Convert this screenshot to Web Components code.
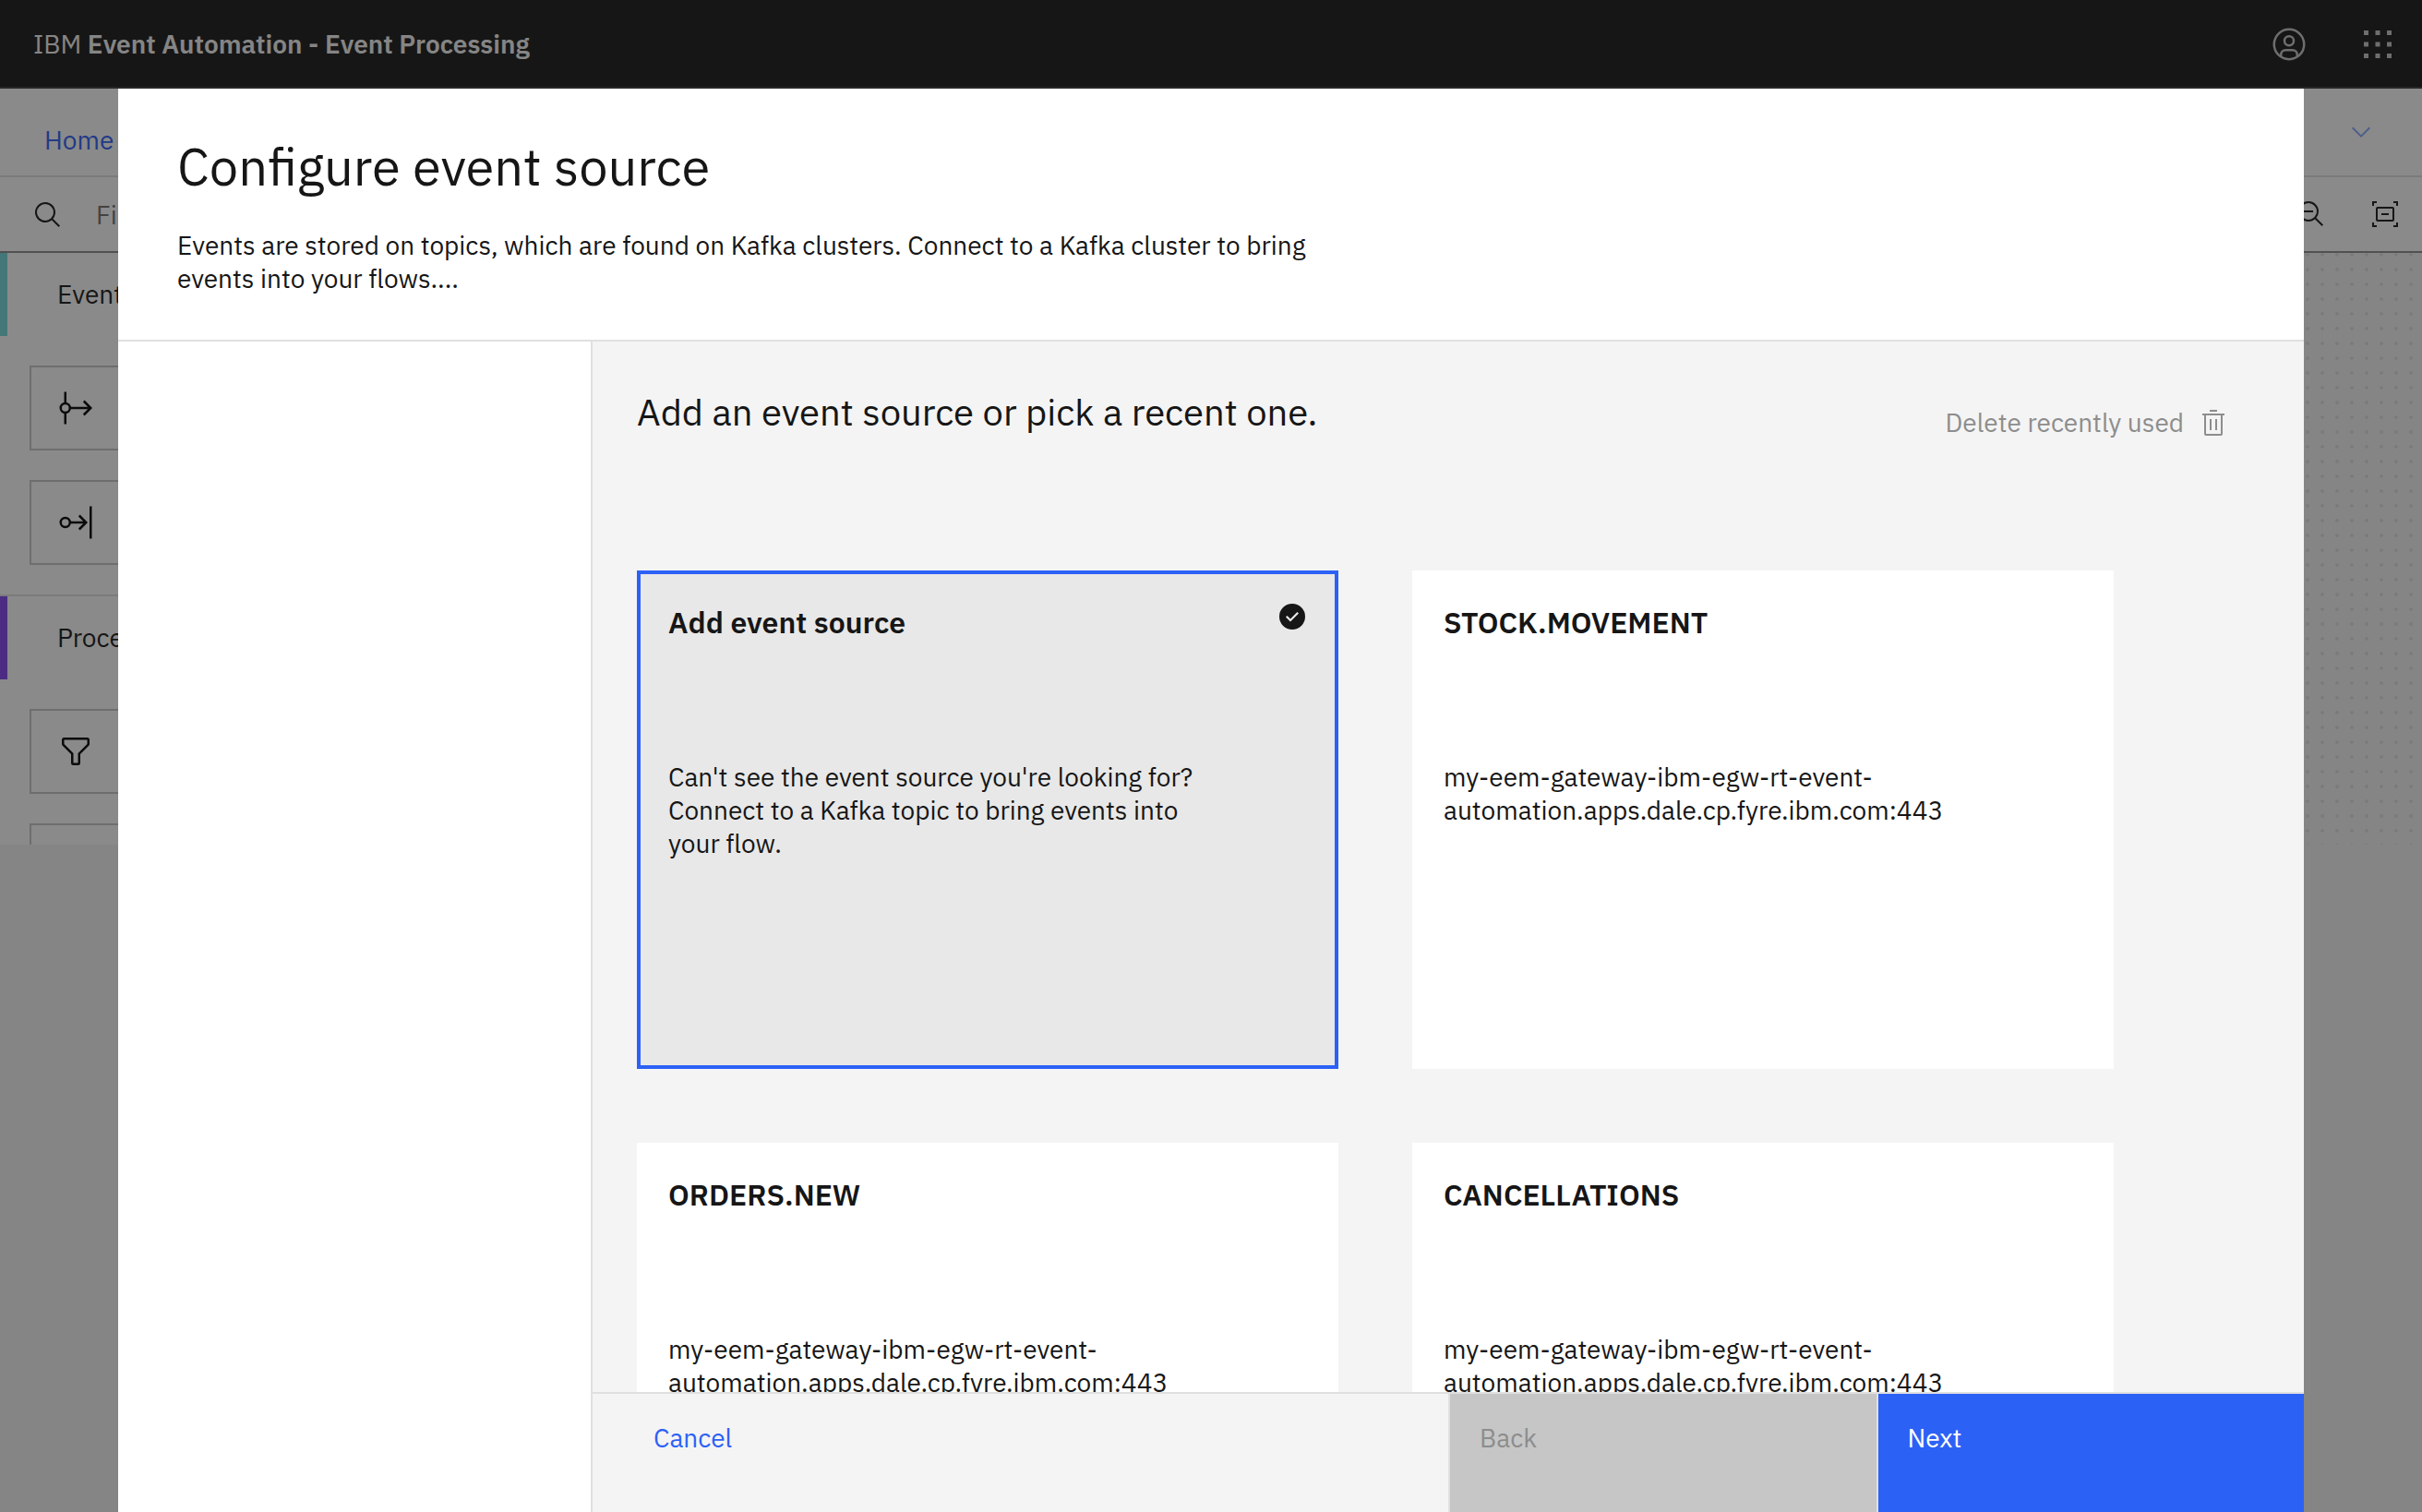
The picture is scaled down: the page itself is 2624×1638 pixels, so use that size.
<!DOCTYPE html>
<html lang="en">
<head>
<meta charset="utf-8">
<meta name="viewport" content="width=device-width, initial-scale=1">
<title>IBM Event Automation - Event Processing</title>
<style>
  :root {
    --text: #161616;
    --text-soft: #8d8d8d;
    --blue: #2c61f6;
    --layer: #f4f4f4;
    --line: #e0e0e0;
    --line-strong: #c6c6c6;
  }
  html, body { height: 100%; }
  body {
    margin: 0;
    overflow: hidden;
    background: var(--layer);
    color: var(--text);
    font-family: "IBM Plex Sans", Roboto, "Liberation Sans", sans-serif;
    font-size: 28px;
    line-height: 36px;
  }
</style>
</head>
<body>
<app-shell>
  <app-header slot="header" company="IBM" product="Event Automation - Event Processing"></app-header>
  <flow-nav slot="nav"></flow-nav>
  <flow-toolbar slot="toolbar"></flow-toolbar>
  <palette-group slot="palette" color="#72d8d8" heading="Events">
    <palette-node icon="source" label="Event source"></palette-node>
    <palette-node icon="destination" label="Event destination"></palette-node>
  </palette-group>
  <palette-group slot="palette" color="#8042ee" heading="Processors" divided>
    <palette-node icon="filter" label="Filter"></palette-node>
    <palette-node label="Transform"></palette-node>
  </palette-group>
</app-shell>

<source-dialog>
  <span slot="title">Configure event source</span>
  <span slot="description">Events are stored on topics, which are found on Kafka clusters. Connect to a Kafka cluster to bring events into your flows....</span>
  <source-picker heading="Add an event source or pick a recent one.">
    <source-card heading="Add event source" selected>Can't see the event source you're looking for? Connect to a Kafka topic to bring events into your flow.</source-card>
    <source-card heading="STOCK.MOVEMENT">my-eem-gateway-ibm-egw-rt-event-automation.apps.dale.cp.fyre.ibm.com:443</source-card>
    <source-card heading="ORDERS.NEW">my-eem-gateway-ibm-egw-rt-event-automation.apps.dale.cp.fyre.ibm.com:443</source-card>
    <source-card heading="CANCELLATIONS">my-eem-gateway-ibm-egw-rt-event-automation.apps.dale.cp.fyre.ibm.com:443</source-card>
  </source-picker>
</source-dialog>

<script>
const ICONS = {
  user: '<g fill="none" stroke="currentColor" stroke-width="2"><circle cx="16" cy="16" r="13"/><circle cx="16" cy="13" r="4"/><path d="M9 26.7V25a4 4 0 0 1 4-4h6a4 4 0 0 1 4 4v1.700"/></g>',
  switcher: '<path d="M4 4h4v4H4zM14 4h4v4h-4zM24 4h4v4h-4zM4 14h4v4H4zM14 14h4v4h-4zM24 14h4v4h-4zM4 24h4v4H4zM14 24h4v4h-4zM24 24h4v4h-4z"/>',
  chevron: '<path d="M16 22 6 12l1.400-1.400 8.600 8.600 8.600-8.600L26 12z"/>',
  search: '<path d="M29 27.586l-7.552-7.552a11.018 11.018 0 1 0-1.414 1.414L27.586 29zM4 13a9 9 0 1 1 9 9 9.010 9.010 0 0 1-9-9z"/>',
  zoomOut: '<path d="M8 12h10v2H8z"/><path d="M21.448 20A10.856 10.856 0 0 0 24 13a11 11 0 1 0-11 11 10.856 10.856 0 0 0 7-2.552L27.586 29 29 27.586zM13 22a9 9 0 1 1 9-9 9.010 9.010 0 0 1-9 9z"/>',
  fit: '<path d="M2 2h5v2H4v3H2zM25 2h5v5h-2V4h-3zM2 25h2v3h3v2H2zM28 25h2v5h-5v-2h3zM12 15h8v2h-8z"/><rect x="7" y="9" width="18" height="14" rx="1" fill="none" stroke="currentColor" stroke-width="2"/>',
  source: '<g fill="none" stroke="currentColor" stroke-width="2"><circle cx="7" cy="16" r="4"/><path d="M7 2v10M7 20v10M11 16h18M23 10l6 6-6 6"/></g>',
  destination: '<g fill="none" stroke="currentColor" stroke-width="2"><circle cx="7" cy="16" r="4"/><path d="M29 2v28M11 16h14M19 10l6 6-6 6"/></g>',
  filter: '<path d="M18 28h-4a2 2 0 0 1-2-2v-7.590L4.590 11A2 2 0 0 1 4 9.590V6a2 2 0 0 1 2-2h20a2 2 0 0 1 2 2v3.590A2 2 0 0 1 27.410 11L20 18.410V26a2 2 0 0 1-2 2zM6 6v3.590l8 8V26h4v-8.410l8-8V6z"/>',
  trash: '<path d="M12 12h2v12h-2zM18 12h2v12h-2z"/><path d="M4 6v2h2v20a2 2 0 0 0 2 2h16a2 2 0 0 0 2-2V8h2V6zM8 28V8h16v20zM12 2h8v2h-8z"/>',
  check: '<path d="M16 2a14 14 0 1 0 14 14A14 14 0 0 0 16 2zm-2 19.590l-5-5L10.590 15 14 18.410 21.410 11 23 12.580z"/>'
};

const define = (name, css, markup) => customElements.define(name, class extends HTMLElement {
  connectedCallback() {
    if (this.shadowRoot) return;
    const root = this.attachShadow({ mode: 'open' });
    root.innerHTML = `<style>*{box-sizing:border-box}button,input{font:inherit;border:0;border-radius:0;margin:0}${css}</style>${markup(this)}`;
  }
});
const attr = (el, name) => el.getAttribute(name) || '';

define('ui-icon', `
  :host { display: block; flex: none; width: 32px; height: 32px; }
  :host([large]) { width: 40px; height: 40px; }
  svg { display: block; width: 100%; height: 100%; fill: currentColor; }
`, el => `<svg viewBox="0 0 32 32" aria-hidden="true">${ICONS[attr(el, 'name')] || ''}</svg>`);

define('app-shell', `
  :host { display: block; }
  .workspace { display: flex; height: 641px; overflow: hidden; }
  .palette { flex: none; width: 512px; background: #fff; overflow: hidden; }
  .canvas {
    flex: 1;
    background: radial-gradient(circle, var(--line) 2px, transparent 2px) right 4px top -6px / 16px 16px;
  }
`, () => `
  <slot name="header"></slot>
  <slot name="nav"></slot>
  <slot name="toolbar"></slot>
  <div class="workspace">
    <aside class="palette"><slot name="palette"></slot></aside>
    <div class="canvas"></div>
  </div>`);

define('app-header', `
  :host { display: block; background: #161616; border-bottom: 2px solid #393939; }
  header {
    display: flex; align-items: center; justify-content: space-between;
    height: 94px; padding: 2px 0 0 36px; color: var(--layer);
  }
  b { font-weight: 600; }
  nav { display: flex; color: var(--line-strong); }
  button { display: grid; place-items: center; width: 96px; height: 92px; padding: 0; background: none; color: inherit; }
`, el => `
  <header>
    <span>${attr(el, 'company')} <b>${attr(el, 'product')}</b></span>
    <nav>
      <button aria-label="User profile"><ui-icon large name="user"></ui-icon></button>
      <button aria-label="App switcher"><ui-icon large name="switcher"></ui-icon></button>
    </nav>
  </header>`);

define('flow-nav', `
  :host { display: block; }
  nav {
    display: flex; align-items: center; justify-content: space-between;
    height: 96px; padding: 0 50px 0 48px; background: #fff; border-bottom: 2px solid var(--line);
  }
  a { padding-top: 18px; color: var(--blue); text-decoration: none; }
  button { padding: 0; background: none; color: #88a8ff; }
`, () => `
  <nav>
    <a href="#home">Home</a>
    <button aria-label="Expand details"><ui-icon name="chevron"></ui-icon></button>
  </nav>`);

define('flow-toolbar', `
  :host { display: block; }
  div { display: flex; align-items: center; }
  .bar { justify-content: space-between; height: 82px; padding: 0 24px 0 36px; background: #fff; border-bottom: 2px solid var(--text-soft); }
  label { display: flex; align-items: center; gap: 36px; padding-top: 2px; }
  input { width: 320px; padding: 0; background: none; color: inherit; outline: 0; }
  input::placeholder { color: #6f6f6f; opacity: 1; }
  .tools { gap: 48px; }
  button { padding: 0; background: none; color: inherit; }
`, () => `
  <div class="bar">
    <label><ui-icon name="search"></ui-icon><input type="text" placeholder="Find" aria-label="Find"></label>
    <div class="tools">
      <button aria-label="Zoom out"><ui-icon name="zoomOut"></ui-icon></button>
      <button aria-label="Fit to screen"><ui-icon name="fit"></ui-icon></button>
    </div>
  </div>`);

define('palette-group', `
  :host { display: block; }
  :host([divided]) { border-top: 2px solid var(--line); }
  h2 { display: flex; align-items: center; height: 90px; margin: 0; padding-left: 54px; border-left: 8px solid; font-size: inherit; font-weight: 400; }
  h2 span { color: var(--text); }
  .nodes { display: grid; gap: 32px; padding: 32px; }
`, el => `
  <h2 style="border-color:${attr(el, 'color')}"><span>${attr(el, 'heading')}</span></h2>
  <div class="nodes"><slot></slot></div>`);

define('palette-node', `
  :host { display: block; }
  button { display: flex; align-items: center; width: 100%; height: 92px; padding: 0 28px; background: none; color: #000; border: 2px solid var(--line-strong); }
`, el => `<button aria-label="${attr(el, 'label')}"><ui-icon large name="${attr(el, 'icon')}"></ui-icon></button>`);

define('source-dialog', `
  :host { position: fixed; inset: 0; display: flex; padding: 96px 128px 0; background: rgba(22, 22, 22, .5); }
  section { flex: 1; display: flex; flex-direction: column; min-width: 0; background: #fff; }
  header { padding: 48px 64px; border-bottom: 2px solid var(--line); }
  h1 { margin: 0 0 32px; font-size: 56px; line-height: 72px; font-weight: 400; }
  p { margin: 0; max-width: 1280px; }
  .body { flex: 1; display: flex; min-height: 0; }
  aside { flex: none; width: 514px; border-right: 2px solid var(--line); }
  .content { flex: 1; display: flex; flex-direction: column; min-width: 0; background: var(--layer); }
  main { flex: 1; min-height: 0; overflow: hidden; padding: 48px 50px 48px 48px; }
  footer { display: grid; grid-template-columns: 2fr 1fr 1fr; height: 130px; border-top: 2px solid var(--line); }
  footer button { display: flex; align-items: flex-start; padding: 30px 32px; text-align: left; }
  footer .cancel { padding-left: 66px; background: none; color: var(--blue); }
  .back { background: var(--line-strong); color: var(--text-soft); border-left: 2px solid var(--line); }
  .next { background: var(--blue); color: #fff; border-left: 2px solid var(--line); }
`, () => `
  <section role="dialog" aria-modal="true" aria-labelledby="title">
    <header>
      <h1 id="title"><slot name="title"></slot></h1>
      <p><slot name="description"></slot></p>
    </header>
    <div class="body">
      <aside></aside>
      <div class="content">
        <main><slot></slot></main>
        <footer>
          <button class="cancel">Cancel</button>
          <button class="back" disabled>Back</button>
          <button class="next">Next</button>
        </footer>
      </div>
    </div>
  </section>`);

define('source-picker', `
  :host { display: block; }
  .top { display: flex; justify-content: space-between; align-items: flex-start; margin-bottom: 120px; }
  h2 { margin: 0; font-size: 40px; line-height: 56px; font-weight: 400; }
  button { display: flex; align-items: center; gap: 16px; height: 80px; padding: 0 32px; background: none; color: var(--text-soft); }
  .grid { display: grid; grid-template-columns: repeat(auto-fill, 760px); gap: 80px; }
`, el => `
  <div class="top">
    <h2>${attr(el, 'heading')}</h2>
    <button disabled>Delete recently used <ui-icon name="trash"></ui-icon></button>
  </div>
  <div class="grid"><slot></slot></div>`);

define('source-card', `
  :host { display: block; }
  button {
    display: flex; flex-direction: column; justify-content: flex-start; align-items: stretch; gap: 128px;
    width: 100%; height: 540px; padding: 30px; text-align: left;
    background: #fff; color: var(--text); border: 4px solid #fff;
  }
  :host([selected]) button { background: #e8e8e8; border-color: var(--blue); }
  .top { display: flex; justify-content: space-between; align-items: flex-start; }
  b { font-size: 32px; line-height: 44px; font-weight: 600; }
  .text { max-width: 600px; }
`, el => `
  <button aria-pressed="${el.hasAttribute('selected')}">
    <span class="top"><b>${attr(el, 'heading')}</b>${el.hasAttribute('selected') ? '<ui-icon name="check"></ui-icon>' : ''}</span>
    <span class="text"><slot></slot></span>
  </button>`);
</script>
</body>
</html>
